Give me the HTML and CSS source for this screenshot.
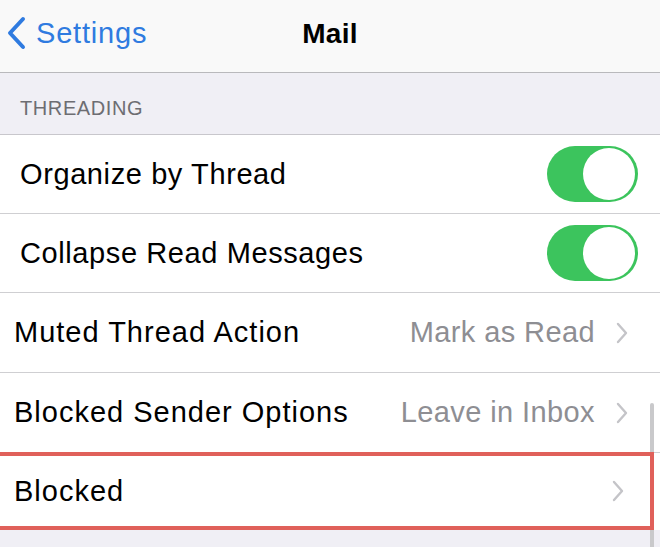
FILE: index.html
```html
<!DOCTYPE html>
<html lang="en">
<head>
  <meta charset="UTF-8">
  <meta name="viewport" content="width=device-width, initial-scale=1.0">
  <title>Mail</title>
  <link rel="stylesheet" href="styles.css">
</head>
<body>

  <header class="navbar">
    <a class="back" href="#">
      <svg class="back-icon" width="22" height="34" viewBox="0 0 22 34">
        <path d="M18 3 L5 17 L18 31" fill="none" stroke="#2f7be0" stroke-width="4" stroke-linecap="round" stroke-linejoin="round"/>
      </svg>
      <span>Settings</span>
    </a>
    <h1 class="title">Mail</h1>
  </header>

  <div class="group-title">THREADING</div>

  <ul class="list">
    <li class="row row-top">
      <span class="label narrow">Organize by Thread</span>
      <span class="switch on"><span class="knob"></span></span>
    </li>
    <li class="row row-top">
      <span class="label narrow">Collapse Read Messages</span>
      <span class="switch on"><span class="knob"></span></span>
    </li>
    <li class="row row-tall">
      <span class="label">Muted Thread Action</span>
      <span class="value">Mark as Read</span>
      <span class="chevron">
        <svg width="12" height="22" viewBox="0 0 12 22"><path d="M2 2 L10 11 L2 20" fill="none" stroke="#c4c4c8" stroke-width="2.4" stroke-linecap="round" stroke-linejoin="round"/></svg>
      </span>
    </li>
    <li class="row row-tall">
      <span class="label">Blocked Sender Options</span>
      <span class="value">Leave in Inbox</span>
      <span class="chevron">
        <svg width="12" height="22" viewBox="0 0 12 22"><path d="M2 2 L10 11 L2 20" fill="none" stroke="#c4c4c8" stroke-width="2.4" stroke-linecap="round" stroke-linejoin="round"/></svg>
      </span>
    </li>
    <li class="row highlight">
      <span class="label">Blocked</span>
      <span class="chevron">
        <svg width="12" height="22" viewBox="0 0 12 22"><path d="M2 2 L10 11 L2 20" fill="none" stroke="#c4c4c8" stroke-width="2.4" stroke-linecap="round" stroke-linejoin="round"/></svg>
      </span>
    </li>
  </ul>

  <div class="scrollbar"></div>

</body>
</html>
```

FILE: styles.css
```css
body {
  margin: 0;
  padding: 0;
  background-color: #f0eff5;
  font-family: "Liberation Sans", Arial, sans-serif;
  color: #000;
  position: relative;
  height: 547px;
  overflow: hidden;
}

/* top navigation bar */
.navbar {
  height: 72px;
  background-color: #f9f9f9;
  border-bottom: 1px solid #b9b9bc;
  display: flex;
  align-items: center;
  justify-content: center;
  position: relative;
}
.back {
  position: absolute;
  left: 5px;
  top: 16px;
  display: flex;
  align-items: center;
  gap: 9px;
  color: #2f7be0;
  text-decoration: none;
  font-size: 29px;
  letter-spacing: 0.8px;
}
.title {
  margin: 0 0 4px;
  font-size: 28px;
  font-weight: bold;
  letter-spacing: 0.3px;
}

.group-title {
  height: 62px;
  box-sizing: border-box;
  padding: 24px 0 0 20px;
  font-size: 20px;
  color: #6d6d72;
  letter-spacing: 0.6px;
  border-bottom: 1px solid #c8c7cc;
}

.list {
  list-style: none;
  margin: 0;
  padding: 0;
  background-color: #fff;
}
.row {
  height: 79px;
  box-sizing: border-box;
  display: flex;
  align-items: center;
  padding: 0 32px 0 14px;
  border-bottom: 1px solid #cfcfd2;
  font-size: 29px;
}
.row-tall {
  height: 80px;
}
.row-top {
  padding-left: 20px;
  padding-right: 22px;
}
.label {
  flex: 1;
  letter-spacing: 1px;
}
.label.narrow {
  letter-spacing: 0.6px;
}
.value {
  color: #8e8e93;
  letter-spacing: 0.4px;
  margin-right: 21px;
}
.chevron {
  display: flex;
  align-items: center;
}

/* toggle switch */
.switch {
  width: 91px;
  height: 56px;
  border-radius: 28px;
  background-color: #3cc45d;
  position: relative;
  box-sizing: border-box;
}
.switch .knob {
  position: absolute;
  right: 3px;
  top: 2px;
  width: 52px;
  height: 52px;
  border-radius: 50%;
  background: #fff;
  box-shadow: 0 0 0 1px #3cc45d;
}

/* red outline drawn over the selected row */
.row.highlight {
  position: relative;
  z-index: 1;
  height: 78px;
  border: 4px solid #e0605a;
  border-left: none;
  margin-right: 6px;
  padding-right: 26px;
  margin-top: -1px;
}

.scrollbar {
  position: absolute;
  left: 650px;
  top: 403px;
  width: 4px;
  height: 150px;
  border-radius: 2px;
  background-color: #c9c9cb;
}
```
